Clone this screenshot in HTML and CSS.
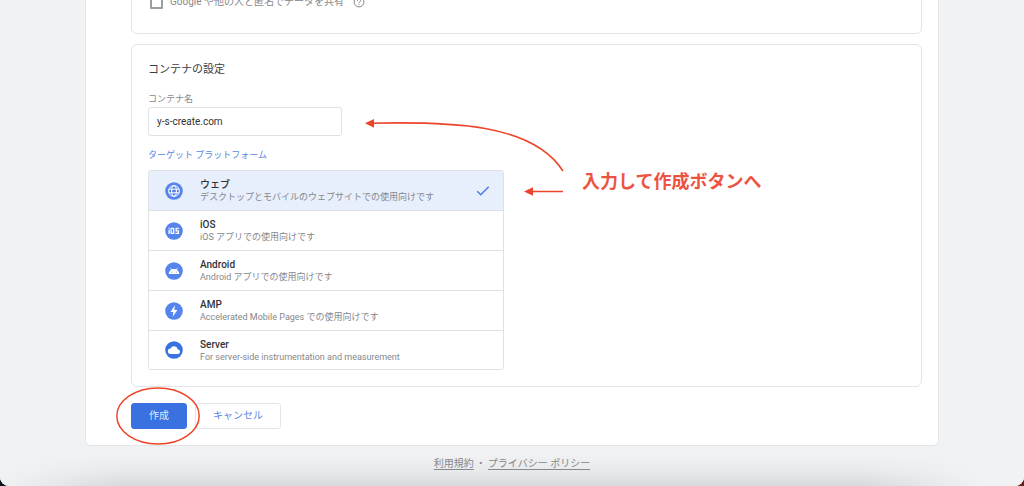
FILE: index.html
```html
<!DOCTYPE html>
<html lang="ja">
<head>
<meta charset="utf-8">
<meta name="viewport" content="width=device-width, initial-scale=1">
<title>コンテナの設定</title>
<link rel="stylesheet" href="styles.css">
</head>
<body>
<div class="page">
  <main class="sheet">
    <form class="form">
      <section class="card card-account">
        <label class="share">
          <input class="share-box" type="checkbox">
          <span>Google や他の人と匿名でデータを共有</span>
          <svg class="help" viewBox="0 0 12 12" aria-hidden="true"><circle cx="6" cy="6" r="4.9"/><path d="M4.4 4.8C4.4 2.6 7.6 2.7 7.6 4.7C7.6 5.8 6 5.9 6 7.2M6 8.1V9.1"/></svg>
        </label>
      </section>

      <section class="card card-container">
        <h2 class="card-title">コンテナの設定</h2>
        <label class="field-label" for="name">コンテナ名</label>
        <input class="field" id="name" type="text" value="y-s-create.com">

        <fieldset class="platforms">
          <legend class="platforms-label">ターゲット プラットフォーム</legend>
          <div class="options">
            <label class="option">
              <input class="option-radio" type="radio" name="platform" checked>
              <svg class="option-icon" viewBox="0 0 18 18" aria-hidden="true"><circle class="disc" cx="9" cy="9" r="8.8"/><g class="line"><circle cx="9" cy="9" r="5.4"/><ellipse cx="9" cy="9" rx="2.4" ry="5.4"/><path d="M4 7.2H14M4 10.8H14"/></g></svg>
              <span class="option-text"><span class="option-name">ウェブ</span><span class="option-note">デスクトップとモバイルのウェブサイトでの使用向けです</span></span>
              <svg class="check" viewBox="0 0 14 12" aria-hidden="true"><path d="M1.2 6.2L4.8 9.8L12.7 1.8"/></svg>
            </label>
            <label class="option">
              <input class="option-radio" type="radio" name="platform">
              <svg class="option-icon" viewBox="0 0 18 18" aria-hidden="true"><circle class="disc" cx="9" cy="9" r="8.8"/><g class="thick"><path d="M4.1 7.8V12M4.1 5.8V6.8"/><rect x="6.1" y="6.4" width="2.6" height="5" rx=".5"/><path d="M13.9 6.4H11.2V8.8H13.4V11.4H10.4"/></g></svg>
              <span class="option-text"><span class="option-name">iOS</span><span class="option-note">iOS アプリでの使用向けです</span></span>
            </label>
            <label class="option">
              <input class="option-radio" type="radio" name="platform">
              <svg class="option-icon" viewBox="0 0 18 18" aria-hidden="true"><circle class="disc" cx="9" cy="9" r="8.8"/><path class="solid" d="M3.7 11.9C3.8 9.9 4.8 8.5 6.2 7.7L5.2 6L5.8 5.7L6.8 7.4C8.2 6.9 9.8 6.9 11.2 7.4L12.2 5.7L12.8 6L11.8 7.7C13.2 8.5 14.2 9.9 14.3 11.9Z"/><circle class="disc" cx="6.7" cy="10" r=".6"/><circle class="disc" cx="11.3" cy="10" r=".6"/></svg>
              <span class="option-text"><span class="option-name">Android</span><span class="option-note">Android アプリでの使用向けです</span></span>
            </label>
            <label class="option">
              <input class="option-radio" type="radio" name="platform">
              <svg class="option-icon" viewBox="0 0 18 18" aria-hidden="true"><circle class="disc" cx="9" cy="9" r="8.8"/><path class="solid" d="M9.9 3.2L5.5 10H8.3L7.7 14.8L12.4 7.9H9.4Z"/></svg>
              <span class="option-text"><span class="option-name">AMP</span><span class="option-note">Accelerated Mobile Pages での使用向けです</span></span>
            </label>
            <label class="option">
              <input class="option-radio" type="radio" name="platform">
              <svg class="option-icon" viewBox="0 0 18 18" aria-hidden="true"><circle class="disc disc-deep" cx="9" cy="9" r="8.8"/><path class="solid" d="M5.8 13A2.8 2.8 0 0 1 5.5 7.4A3.9 3.9 0 0 1 12.7 8.2A2.4 2.4 0 0 1 12.6 13Z"/></svg>
              <span class="option-text"><span class="option-name">Server</span><span class="option-note">For server-side instrumentation and measurement</span></span>
            </label>
          </div>
        </fieldset>

        <svg class="arrows" viewBox="0 0 200 80" aria-hidden="true"><path class="stroke" d="M8 8.2C90 6.5 171 8 202 56M168 76.5H202"/><path class="head" d="M4 8.2L13 3.9V12.7ZM163 76.5L172 72.2V80.8Z"/></svg>
        <p class="callout">入力して作成ボタンへ</p>
      </section>

      <div class="actions">
        <button class="button button-primary" type="button">作成</button>
        <button class="button button-plain" type="button">キャンセル</button>
        <svg class="ring" viewBox="0 0 86 60" aria-hidden="true"><ellipse cx="43" cy="30" rx="41.2" ry="28"/></svg>
      </div>
    </form>
  </main>
  <footer class="footer">
    <a href="#terms">利用規約</a><span>・</span><a href="#privacy">プライバシー ポリシー</a>
  </footer>
</div>
</body>
</html>
```
FILE: styles.css
```css
* {
  box-sizing: border-box;
}

body {
  margin: 0;
  background: linear-gradient(90deg, #0c1724 50%, #64231a 50%);
  color: #3c4043;
  font-family: Roboto, "Noto Sans CJK JP", sans-serif;
  font-size: 10px;
  line-height: 14px;
}

.page {
  display: flex;
  flex-direction: column;
  min-height: 100vh;
  overflow: hidden;
  background: #f0f2f4;
  border-radius: 0 0 9px 9px;
}

.sheet {
  margin: -20px 85px 0;
  padding: 0 16px 16px 45px;
  background: #fff;
  border: 1px solid #e3e5e8;
  border-radius: 0 0 6px 6px;
}

.form {
  display: flex;
  flex-direction: column;
}

.card {
  border: 1px solid #e2e4e7;
  border-radius: 6px;
}

.card-account {
  padding: 13px 18px 24px;
}

.share {
  display: flex;
  align-items: center;
  gap: 7px;
  color: #85888c;
}

.share-box {
  appearance: none;
  width: 13px;
  height: 13px;
  margin: 0;
  border: 2px solid #9a9da2;
  border-radius: 1px;
}

.help {
  width: 12px;
  height: 12px;
  margin-left: 2px;
  fill: none;
  stroke: #85888c;
}

.card-container {
  position: relative;
  margin-top: 10px;
  padding: 17px 16px 16px;
}

.card-title {
  margin: 0 0 14px;
  font-size: 11px;
  font-weight: 400;
  line-height: 16px;
}

.field-label {
  display: block;
  margin-bottom: 1px;
  color: #85888c;
  font-size: 9px;
}

.field {
  display: block;
  width: 194px;
  height: 29px;
  padding: 0 8px;
  border: 1px solid #dfe1e4;
  border-radius: 3px;
  color: #303336;
  font: inherit;
}

.platforms {
  margin: 12px 0 0;
  padding: 0;
  border: 0;
}

.platforms-label {
  padding: 0;
  color: #5a86e4;
  font-size: 9px;
}

.options {
  width: 356px;
  max-width: 100%;
  margin-top: 8px;
  overflow: hidden;
  border: 1px solid #dfe1e4;
  border-radius: 3px;
}

.option {
  display: flex;
  align-items: center;
  gap: 17px;
  height: 40px;
  padding: 0 13px 0 16px;
  border-bottom: 1px solid #dfe1e4;
}

.option:last-child {
  height: 38px;
  border-bottom: 0;
}

.option:has(:checked) {
  background: #e7eefc;
}

.option-radio {
  position: absolute;
  appearance: none;
  margin: 0;
}

.option-icon {
  width: 18px;
  height: 18px;
}

.disc {
  fill: #5585ec;
}

.disc-deep {
  fill: #3972e0;
}

.solid {
  fill: #fff;
}

.line {
  fill: none;
  stroke: #fff;
}

.thick {
  fill: none;
  stroke: #fff;
  stroke-width: 1.3;
}

.option-text {
  display: flex;
  flex: 1;
  flex-direction: column;
}

.option-name {
  color: #303336;
  font-weight: 500;
  line-height: 13px;
}

.option-note {
  color: #85888c;
  font-size: 9px;
  line-height: 12px;
}

.check {
  width: 14px;
  height: 12px;
  fill: none;
  stroke: #4a7de6;
  stroke-width: 1.5;
}

.arrows {
  position: absolute;
  top: 70px;
  left: 229px;
  width: 200px;
  height: 80px;
  overflow: visible;
}

.stroke {
  fill: none;
  stroke: #ec452b;
  stroke-width: 1.6;
}

.head {
  fill: #ec452b;
}

.callout {
  position: absolute;
  top: 125px;
  left: 450px;
  margin: 0;
  color: #ec5442;
  font-size: 18px;
  font-weight: 700;
  line-height: 24px;
}

.actions {
  position: relative;
  display: flex;
  gap: 8px;
  margin-top: 16px;
}

.button {
  height: 26px;
  padding: 0 17px;
  border: 1px solid #e2e4e7;
  border-radius: 3px;
  background: #fff;
  color: #5a86e4;
  font: inherit;
}

.button-primary {
  border-color: #3972e0;
  background: #3972e0;
  color: #dfe9fc;
}

.ring {
  position: absolute;
  top: -17px;
  left: -16px;
  width: 86px;
  height: 60px;
  fill: none;
  stroke: #ec452b;
  stroke-width: 1.5;
  pointer-events: none;
}

.footer {
  display: flex;
  flex: 1;
  justify-content: center;
  padding: 11px 0 14px;
  background:
    linear-gradient(90deg, #f0f2f4 0, transparent 12%, transparent 84%, #f0f2f4 96%),
    linear-gradient(#f0f2f4 20%, #e8eaeb 60%, #d8d9da);
  color: #85888c;
}

.footer span {
  padding: 0 2px;
}

.footer a {
  color: inherit;
  text-underline-offset: 2px;
}
```
